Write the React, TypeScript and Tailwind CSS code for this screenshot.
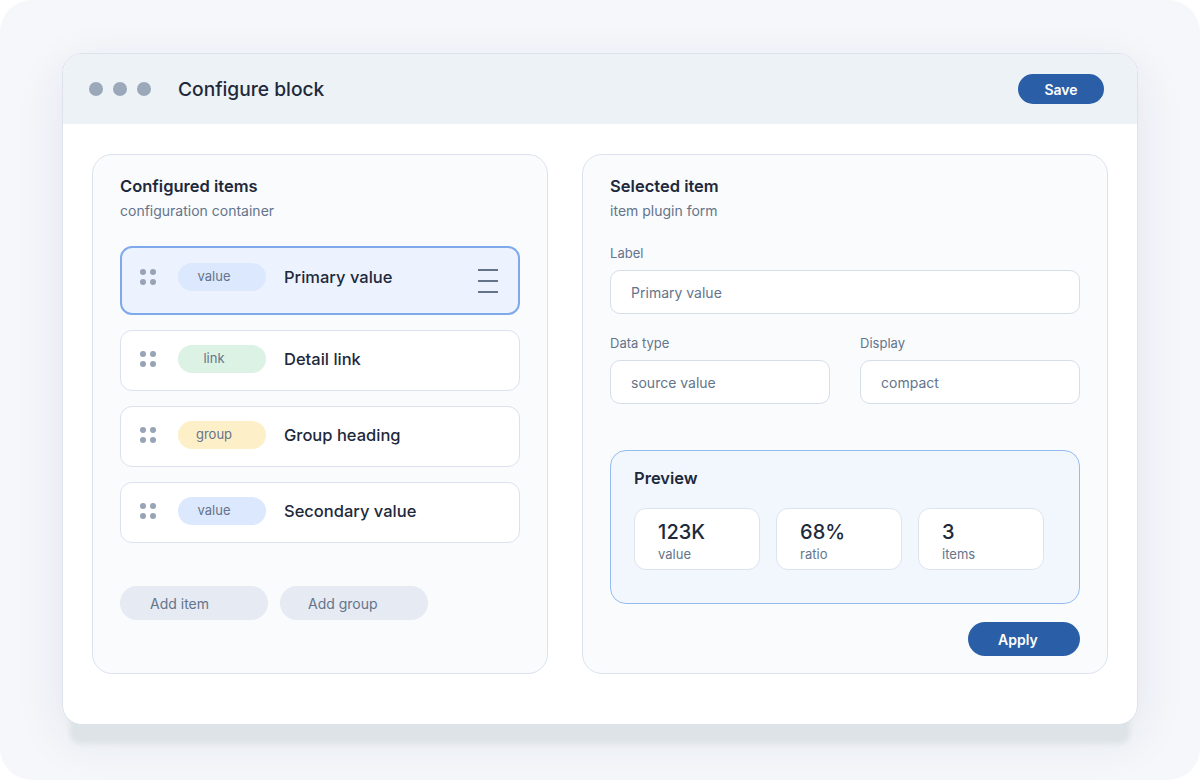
import React from "react";

type Item = {
  tag: string;
  tagClass: string;
  title: string;
  selected?: boolean;
};

const items: Item[] = [
  { tag: "value", tagClass: "bg-[#dbe8fd]", title: "Primary value", selected: true },
  { tag: "link", tagClass: "bg-[#dcf2e5]", title: "Detail link" },
  { tag: "group", tagClass: "bg-[#fdefc8]", title: "Group heading" },
  { tag: "value", tagClass: "bg-[#dbe8fd]", title: "Secondary value" },
];

const stats = [
  { value: "123K", label: "value" },
  { value: "68%", label: "ratio" },
  { value: "3", label: "items" },
];

function DragHandle() {
  return (
    <div className="grid grid-cols-2 gap-x-[4px] gap-y-[4px] w-[16px]">
      {[0, 1, 2, 3].map((i) => (
        <span key={i} className="block w-[6px] h-[6px] rounded-full bg-[#97a3b6]" />
      ))}
    </div>
  );
}

function MenuLines() {
  return (
    <svg width="22" height="26" viewBox="0 0 22 26" className="mr-[19px] mt-[5px]">
      <path d="M1 2h20M1 13h20M1 24h20" stroke="#64748b" strokeWidth="2" />
    </svg>
  );
}

function ItemRow({ item }: { item: Item }) {
  return (
    <div
      className={
        item.selected
          ? "h-[69px] flex items-start rounded-[12px] border-2 border-[#7ea9ea] bg-[#edf3fe] pl-[18px] pt-[15px]"
          : "h-[61px] flex items-start rounded-[12px] border border-[#dbe2ed] bg-white pl-[19px] pt-[14px]"
      }
    >
      <div className="h-[28px] flex items-center">
        <DragHandle />
        <span
          className={`ml-[22px] w-[88px] h-[28px] rounded-full flex items-center justify-center pr-[16px] text-[13px] text-[#64748b] ${item.tagClass}`}
        >
          {item.tag}
        </span>
        <span className="ml-[18px] text-[16.5px] font-medium text-[#1e293b]">{item.title}</span>
      </div>
      <span className="flex-1" />
      {item.selected && <MenuLines />}
    </div>
  );
}

function Field({ value }: { value: string }) {
  return (
    <div className="h-[44px] rounded-[10px] border border-[#d6dee9] bg-white flex items-center px-[20px] text-[14px] text-[#64748b]">
      {value}
    </div>
  );
}

export default function App() {
  return (
    <div
      className="w-[1200px] h-[780px] rounded-[32px] bg-[#f5f7fb] pt-[53px] px-[62px] overflow-hidden"
      style={{ fontFamily: "Inter, 'Noto Sans', sans-serif" }}
    >
      <div className="h-[672px] rounded-[20px] border border-[#dce3ec] bg-white overflow-hidden flex flex-col shadow-[0_27px_5px_-8px_#dde3e6,0_14px_50px_rgba(30,41,70,0.09)]">
        {/* title bar */}
        <div className="h-[70px] shrink-0 bg-[#edf2f7] flex items-center pl-[26px] pr-[33px]">
          <div className="flex gap-[10px]">
            <span className="w-[14px] h-[14px] rounded-full bg-[#9ba8ba]" />
            <span className="w-[14px] h-[14px] rounded-full bg-[#9ba8ba]" />
            <span className="w-[14px] h-[14px] rounded-full bg-[#9ba8ba]" />
          </div>
          <h1 className="ml-[27px] text-[19.2px] font-medium text-[#1e293b]">Configure block</h1>
          <span className="flex-1" />
          <button className="w-[86px] h-[30px] rounded-full bg-[#2a5fa8] text-white text-[14px] font-semibold">
            Save
          </button>
        </div>

        {/* body */}
        <div className="flex gap-[34px] pt-[30px] px-[29px]">
          {/* item list */}
          <section className="w-[457px] h-[520px] rounded-[20px] border border-[#dbe2ee] bg-[#f9fbfd] pt-[19px] px-[27px]">
            <h2 className="text-[16.5px] leading-[24px] font-semibold text-[#1e293b]">Configured items</h2>
            <p className="mt-[3px] text-[14px] leading-[20px] text-[#64748b]">configuration container</p>
            <div className="mt-[25px] flex flex-col gap-[15px]">
              {items.map((it, i) => (
                <ItemRow key={i} item={it} />
              ))}
            </div>
            <div className="mt-[43px] flex gap-[12px]">
              <button className="w-[148px] h-[34px] rounded-full bg-[#e5eaf3] text-left pl-[30px] text-[14px] text-[#64748b]">
                Add item
              </button>
              <button className="w-[148px] h-[34px] rounded-full bg-[#e5eaf3] text-left pl-[28px] text-[14px] text-[#64748b]">
                Add group
              </button>
            </div>
          </section>

          {/* item form */}
          <section className="w-[527px] h-[520px] rounded-[20px] border border-[#dbe2ee] bg-[#f9fbfd] pt-[19px] px-[27px] flex flex-col">
            <h2 className="text-[16.5px] leading-[24px] font-semibold text-[#1e293b]">Selected item</h2>
            <p className="mt-[3px] text-[14px] leading-[20px] text-[#64748b]">item plugin form</p>

            <label className="mt-[23px] text-[13px] leading-[18px] text-[#64748b]">Label</label>
            <div className="mt-[8px]">
              <Field value="Primary value" />
            </div>

            <div className="mt-[20px] grid grid-cols-2 gap-[30px]">
              <div className="flex flex-col">
                <label className="text-[13px] leading-[18px] text-[#64748b]">Data type</label>
                <div className="mt-[8px]">
                  <Field value="source value" />
                </div>
              </div>
              <div className="flex flex-col">
                <label className="text-[13px] leading-[18px] text-[#64748b]">Display</label>
                <div className="mt-[8px]">
                  <Field value="compact" />
                </div>
              </div>
            </div>

            <div className="mt-[46px] h-[154px] rounded-[16px] border border-[#95bcf0] bg-[#f2f7fe] pt-[15px] px-[23px]">
              <h3 className="text-[16.5px] leading-[24px] font-semibold text-[#1e293b]">Preview</h3>
              <div className="mt-[18px] flex gap-[16px]">
                {stats.map((s) => (
                  <div
                    key={s.label}
                    className="w-[126px] h-[62px] rounded-[12px] border border-[#dce3ee] bg-white pl-[23px] pt-[10px]"
                  >
                    <div className="text-[20px] leading-[26px] font-medium text-[#1e293b]">{s.value}</div>
                    <div className="text-[13px] leading-[18px] text-[#64748b]">{s.label}</div>
                  </div>
                ))}
              </div>
            </div>

            <div className="mt-[18px] flex justify-end">
              <button className="w-[112px] h-[34px] rounded-full bg-[#2a5fa8] text-white text-[14px] font-semibold text-left pl-[30px]">
                Apply
              </button>
            </div>
          </section>
        </div>
      </div>
    </div>
  );
}
